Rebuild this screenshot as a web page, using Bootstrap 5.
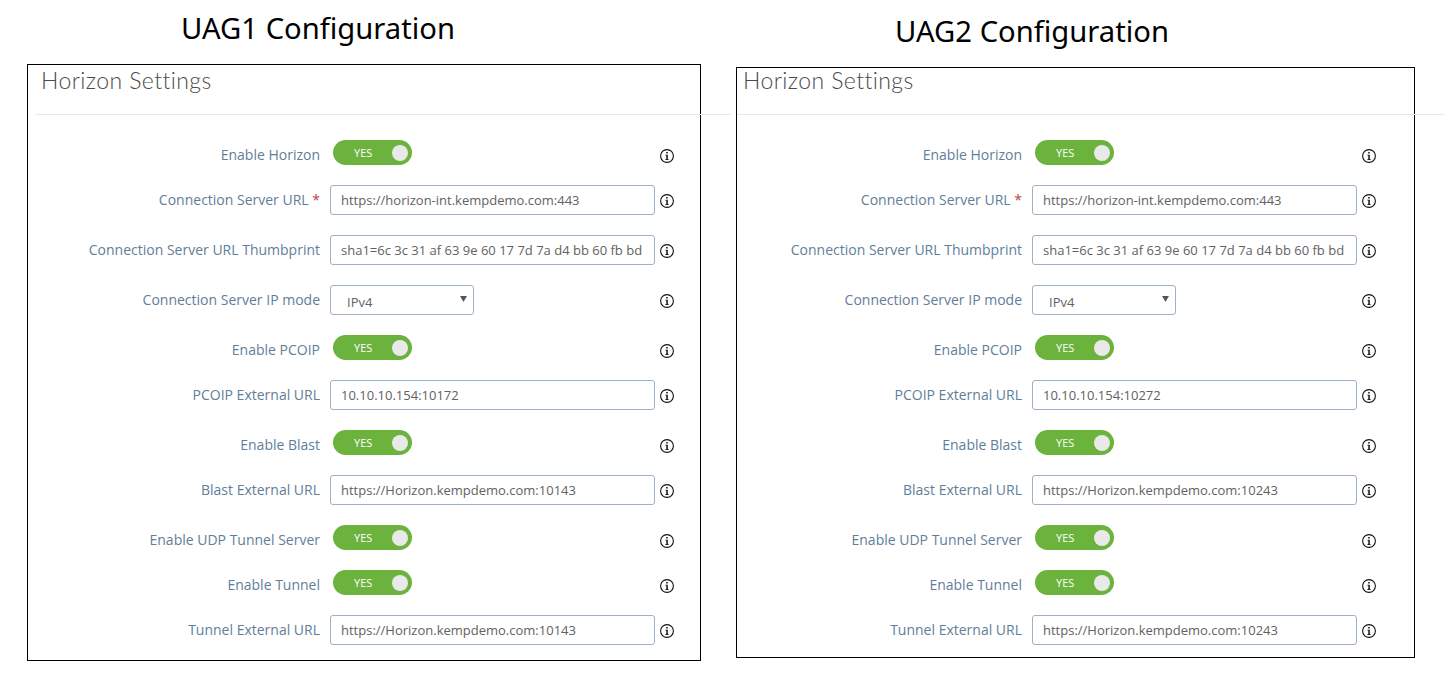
<!DOCTYPE html>
<html lang="en">
<head>
<meta charset="utf-8">
<title>UAG Configuration</title>
<link href="https://cdn.jsdelivr.net/npm/bootstrap@5.3.0/dist/css/bootstrap.min.css" rel="stylesheet">
<style>
html,body{height:686px;overflow:hidden;background:#fff}
body{font-family:"Open Sans",sans-serif;color:#000}
.stage{width:1447px;height:686px}
.side-a{width:701px;padding-left:27px}
.side-b{width:746px;padding-left:35px}
.uag-title{font-family:"Noto Sans","DejaVu Sans",sans-serif;font-size:29.2px;line-height:40px;margin:0;font-weight:400;color:#000}
.side-a .uag-title{padding:8px 0 0 154px;height:64px}
.side-b .uag-title{padding:11px 0 0 159px;height:67px}
.frame{border:1px solid #000}
.side-a .frame{width:674px;height:597px}
.side-b .frame{width:679px;height:591px}
.pane-head{font-family:Lato,sans-serif;font-weight:300;font-size:23px;line-height:30px;color:#4a4a4a;letter-spacing:.42px;margin:0}
.side-a .pane-head{padding:0 0 0 13px;height:49px}
.side-b .pane-head{padding:0 0 0 6px;height:46px;line-height:24px}
.head-rule{height:1px;background:#e6e8ea;border:0;opacity:1;margin:0}
.side-a .head-rule{margin-left:8px;width:695px}
.side-b .head-rule{width:707px}
.cfg-list{gap:20px;padding-top:25px}
.cfg-row{height:30px}
.cfg-row.is-switch{height:25px}
.cfg-label{height:30px;line-height:30px;text-align:right;font-size:14px;color:#5f7e99;flex:0 0 auto;white-space:nowrap}
.side-a .cfg-label{width:292px}
.side-b .cfg-label{width:285px}
.req{color:#b5443c}
.cfg-ctl{width:325px;margin-left:10px;flex:0 0 auto}
.form-control.cfg-input,.form-select.cfg-input{height:30px;min-height:30px;padding:0 10px;font-size:13px;line-height:28px;color:#626262;border:1px solid #9db1c4;border-radius:3px;font-family:"Open Sans",sans-serif;box-shadow:none}
.form-select.cfg-input{width:144px;padding-left:16px;padding-top:2px;background-image:url("data:image/svg+xml,%3Csvg xmlns='http://www.w3.org/2000/svg' viewBox='0 0 8 7'%3E%3Cpath fill='%23555' d='M0 0h8L4 7z'/%3E%3C/svg%3E");background-size:7px 6px;background-position:right 6px top 10px}
.cfg-toggle{width:79px;height:25px;margin-left:3px;background:#6cb33e;border-radius:13px;color:#fff;font-size:11px}
.cfg-toggle b{font-weight:400;padding-left:21px;padding-top:1px;line-height:24px}
.cfg-knob{width:16px;height:16px;border-radius:50%;background:#e9e9e9;margin-right:4px}
.cfg-info{width:14px;height:30px;margin-left:5px;flex:0 0 auto}
.cfg-info svg{margin-top:2px}
</style>
</head>
<body>
<svg width="0" height="0" class="d-block position-absolute">
  <symbol id="info" viewBox="0 0 14 14">
    <circle cx="7" cy="7" r="6.4" fill="none" stroke="#111" stroke-width="1.1"/>
    <rect x="6.2" y="3" width="1.5" height="1.5" fill="#111"/>
    <path d="M5.4 5.7h2.4v4.5h.9v.8H5.3v-.8h1V6.5H5.4z" fill="#111"/>
  </symbol>
</svg>
<div class="stage d-flex">
  <section class="side-a">
    <h2 class="uag-title">UAG1 Configuration</h2>
    <div class="frame">
      <h3 class="pane-head">Horizon Settings</h3>
      <hr class="head-rule">
      <div class="cfg-list d-flex flex-column">
        <div class="cfg-row is-switch d-flex"><div class="cfg-label">Enable Horizon</div><div class="cfg-ctl"><div class="cfg-toggle d-flex align-items-center justify-content-between"><b>YES</b><span class="cfg-knob"></span></div></div><div class="cfg-info d-flex align-items-center"><svg width="14" height="14"><use href="#info"/></svg></div></div>
        <div class="cfg-row d-flex"><div class="cfg-label">Connection Server URL <span class="req">*</span></div><div class="cfg-ctl"><input class="form-control cfg-input" value="https://horizon-int.kempdemo.com:443"></div><div class="cfg-info d-flex align-items-center"><svg width="14" height="14"><use href="#info"/></svg></div></div>
        <div class="cfg-row d-flex"><div class="cfg-label">Connection Server URL Thumbprint</div><div class="cfg-ctl"><input class="form-control cfg-input" value="sha1=6c 3c 31 af 63 9e 60 17 7d 7a d4 bb 60 fb bd"></div><div class="cfg-info d-flex align-items-center"><svg width="14" height="14"><use href="#info"/></svg></div></div>
        <div class="cfg-row d-flex"><div class="cfg-label">Connection Server IP mode</div><div class="cfg-ctl"><select class="form-select cfg-input"><option>IPv4</option></select></div><div class="cfg-info d-flex align-items-center"><svg width="14" height="14"><use href="#info"/></svg></div></div>
        <div class="cfg-row is-switch d-flex"><div class="cfg-label">Enable PCOIP</div><div class="cfg-ctl"><div class="cfg-toggle d-flex align-items-center justify-content-between"><b>YES</b><span class="cfg-knob"></span></div></div><div class="cfg-info d-flex align-items-center"><svg width="14" height="14"><use href="#info"/></svg></div></div>
        <div class="cfg-row d-flex"><div class="cfg-label">PCOIP External URL</div><div class="cfg-ctl"><input class="form-control cfg-input" value="10.10.10.154:10172"></div><div class="cfg-info d-flex align-items-center"><svg width="14" height="14"><use href="#info"/></svg></div></div>
        <div class="cfg-row is-switch d-flex"><div class="cfg-label">Enable Blast</div><div class="cfg-ctl"><div class="cfg-toggle d-flex align-items-center justify-content-between"><b>YES</b><span class="cfg-knob"></span></div></div><div class="cfg-info d-flex align-items-center"><svg width="14" height="14"><use href="#info"/></svg></div></div>
        <div class="cfg-row d-flex"><div class="cfg-label">Blast External URL</div><div class="cfg-ctl"><input class="form-control cfg-input" value="https://Horizon.kempdemo.com:10143"></div><div class="cfg-info d-flex align-items-center"><svg width="14" height="14"><use href="#info"/></svg></div></div>
        <div class="cfg-row is-switch d-flex"><div class="cfg-label">Enable UDP Tunnel Server</div><div class="cfg-ctl"><div class="cfg-toggle d-flex align-items-center justify-content-between"><b>YES</b><span class="cfg-knob"></span></div></div><div class="cfg-info d-flex align-items-center"><svg width="14" height="14"><use href="#info"/></svg></div></div>
        <div class="cfg-row is-switch d-flex"><div class="cfg-label">Enable Tunnel</div><div class="cfg-ctl"><div class="cfg-toggle d-flex align-items-center justify-content-between"><b>YES</b><span class="cfg-knob"></span></div></div><div class="cfg-info d-flex align-items-center"><svg width="14" height="14"><use href="#info"/></svg></div></div>
        <div class="cfg-row d-flex"><div class="cfg-label">Tunnel External URL</div><div class="cfg-ctl"><input class="form-control cfg-input" value="https://Horizon.kempdemo.com:10143"></div><div class="cfg-info d-flex align-items-center"><svg width="14" height="14"><use href="#info"/></svg></div></div>
      </div>
    </div>
  </section>
  <section class="side-b">
    <h2 class="uag-title">UAG2 Configuration</h2>
    <div class="frame">
      <h3 class="pane-head">Horizon Settings</h3>
      <hr class="head-rule">
      <div class="cfg-list d-flex flex-column">
        <div class="cfg-row is-switch d-flex"><div class="cfg-label">Enable Horizon</div><div class="cfg-ctl"><div class="cfg-toggle d-flex align-items-center justify-content-between"><b>YES</b><span class="cfg-knob"></span></div></div><div class="cfg-info d-flex align-items-center"><svg width="14" height="14"><use href="#info"/></svg></div></div>
        <div class="cfg-row d-flex"><div class="cfg-label">Connection Server URL <span class="req">*</span></div><div class="cfg-ctl"><input class="form-control cfg-input" value="https://horizon-int.kempdemo.com:443"></div><div class="cfg-info d-flex align-items-center"><svg width="14" height="14"><use href="#info"/></svg></div></div>
        <div class="cfg-row d-flex"><div class="cfg-label">Connection Server URL Thumbprint</div><div class="cfg-ctl"><input class="form-control cfg-input" value="sha1=6c 3c 31 af 63 9e 60 17 7d 7a d4 bb 60 fb bd"></div><div class="cfg-info d-flex align-items-center"><svg width="14" height="14"><use href="#info"/></svg></div></div>
        <div class="cfg-row d-flex"><div class="cfg-label">Connection Server IP mode</div><div class="cfg-ctl"><select class="form-select cfg-input"><option>IPv4</option></select></div><div class="cfg-info d-flex align-items-center"><svg width="14" height="14"><use href="#info"/></svg></div></div>
        <div class="cfg-row is-switch d-flex"><div class="cfg-label">Enable PCOIP</div><div class="cfg-ctl"><div class="cfg-toggle d-flex align-items-center justify-content-between"><b>YES</b><span class="cfg-knob"></span></div></div><div class="cfg-info d-flex align-items-center"><svg width="14" height="14"><use href="#info"/></svg></div></div>
        <div class="cfg-row d-flex"><div class="cfg-label">PCOIP External URL</div><div class="cfg-ctl"><input class="form-control cfg-input" value="10.10.10.154:10272"></div><div class="cfg-info d-flex align-items-center"><svg width="14" height="14"><use href="#info"/></svg></div></div>
        <div class="cfg-row is-switch d-flex"><div class="cfg-label">Enable Blast</div><div class="cfg-ctl"><div class="cfg-toggle d-flex align-items-center justify-content-between"><b>YES</b><span class="cfg-knob"></span></div></div><div class="cfg-info d-flex align-items-center"><svg width="14" height="14"><use href="#info"/></svg></div></div>
        <div class="cfg-row d-flex"><div class="cfg-label">Blast External URL</div><div class="cfg-ctl"><input class="form-control cfg-input" value="https://Horizon.kempdemo.com:10243"></div><div class="cfg-info d-flex align-items-center"><svg width="14" height="14"><use href="#info"/></svg></div></div>
        <div class="cfg-row is-switch d-flex"><div class="cfg-label">Enable UDP Tunnel Server</div><div class="cfg-ctl"><div class="cfg-toggle d-flex align-items-center justify-content-between"><b>YES</b><span class="cfg-knob"></span></div></div><div class="cfg-info d-flex align-items-center"><svg width="14" height="14"><use href="#info"/></svg></div></div>
        <div class="cfg-row is-switch d-flex"><div class="cfg-label">Enable Tunnel</div><div class="cfg-ctl"><div class="cfg-toggle d-flex align-items-center justify-content-between"><b>YES</b><span class="cfg-knob"></span></div></div><div class="cfg-info d-flex align-items-center"><svg width="14" height="14"><use href="#info"/></svg></div></div>
        <div class="cfg-row d-flex"><div class="cfg-label">Tunnel External URL</div><div class="cfg-ctl"><input class="form-control cfg-input" value="https://Horizon.kempdemo.com:10243"></div><div class="cfg-info d-flex align-items-center"><svg width="14" height="14"><use href="#info"/></svg></div></div>
      </div>
    </div>
  </section>
</div>
<script src="https://cdn.jsdelivr.net/npm/bootstrap@5.3.0/dist/js/bootstrap.bundle.min.js"></script>
</body>
</html>
